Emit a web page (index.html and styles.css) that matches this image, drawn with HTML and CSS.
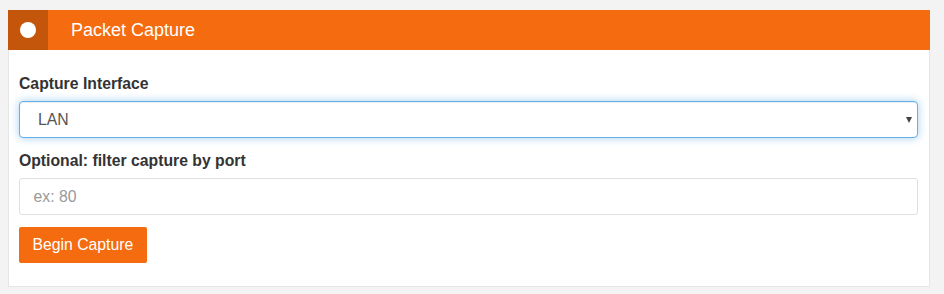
FILE: index.html
```html
<!DOCTYPE html>
<html lang="en">
<head>
    <meta charset="UTF-8">
    <meta name="viewport" content="width=device-width, initial-scale=1.0">
    <title>Packet Capture</title>
    <link rel="stylesheet" href="styles.css">
</head>
<body>

    <div class="panel">
        <div class="panel-heading">
            <span class="panel-icon"><span class="dot"></span></span>
            <h2 class="panel-title">Packet Capture</h2>
        </div>

        <form class="panel-body" id="captureForm">
            <div class="form-group">
                <label for="iface">Capture Interface</label>
                <div class="select-wrap">
                    <select id="iface" name="iface" class="form-control focused">
                        <option>LAN</option>
                        <option>WAN</option>
                    </select>
                </div>
            </div>

            <div class="form-group">
                <label for="port">Optional: filter capture by port</label>
                <input type="text" id="port" name="port" class="form-control" placeholder="ex: 80">
            </div>

            <button type="submit" class="btn">Begin Capture</button>
        </form>
    </div>

</body>
</html>
```

FILE: styles.css
```css
/* packet capture panel */

body {
font-family: 'Liberation Sans', Arial, sans-serif;
background-color: #f3f3f3;
margin: 10px 14px 0 8px;
padding: 0;
}

.panel {
background-color: #fff;
border: 1px solid #e6e6e6;
border-top: none;
box-shadow: 0 1px 2px rgba(0, 0, 0, 0.08);
}

.panel-heading {
display: flex;
align-items: center;
height: 40px;
background-color: #f46b10;
margin: 0 -1px;
}

.panel-icon {
display: flex;
align-items: center;
justify-content: center;
width: 40px;
height: 40px;
background-color: #c4560c;
}

.dot {
width: 16px;
height: 16px;
border-radius: 50%;
background-color: #fff;
}

.panel-title {
margin: 0 0 0 23px;
font-size: 18px;
font-weight: normal;
color: #fff;
}

.panel-body {
padding: 23px 11px 23px 10px;
}

.form-group {
margin-bottom: 12px;
}

label {
display: block;
font-size: 15.75px;
line-height: 22.5px;
font-weight: bold;
color: #333;
margin-bottom: 5.5px;
}

.form-control {
display: block;
width: 100%;
height: 37px;
padding: 0 13.5px;
box-sizing: border-box;
border: 1px solid #e0e0e0;
border-radius: 3px;
font-family: inherit;
font-size: 15.75px;
color: #555;
background-color: #fff;
outline: none;
}

.form-control::placeholder {
color: #999;
}

.select-wrap {
position: relative;
}

.select-wrap::after {
content: "";
position: absolute;
right: 6px;
top: 16px;
border-left: 3.5px solid transparent;
border-right: 3.5px solid transparent;
border-top: 6px solid #444;
pointer-events: none;
}

select.form-control {
appearance: none;
-webkit-appearance: none;
padding-left: 18px;
}

.focused {
border-color: #66afe9;
border-radius: 4px;
box-shadow: inset 0 1px 1px rgba(0, 0, 0, 0.075), 0 0 8px rgba(102, 175, 233, 0.6);
}

.btn {
background-color: #f46b10;
color: #fff;
height: 36px;
padding: 0 13.5px;
border: none;
border-radius: 2px;
font-family: inherit;
font-size: 15.75px;
cursor: pointer;
}

.btn:hover {
background-color: #d95c0a;
}
```
